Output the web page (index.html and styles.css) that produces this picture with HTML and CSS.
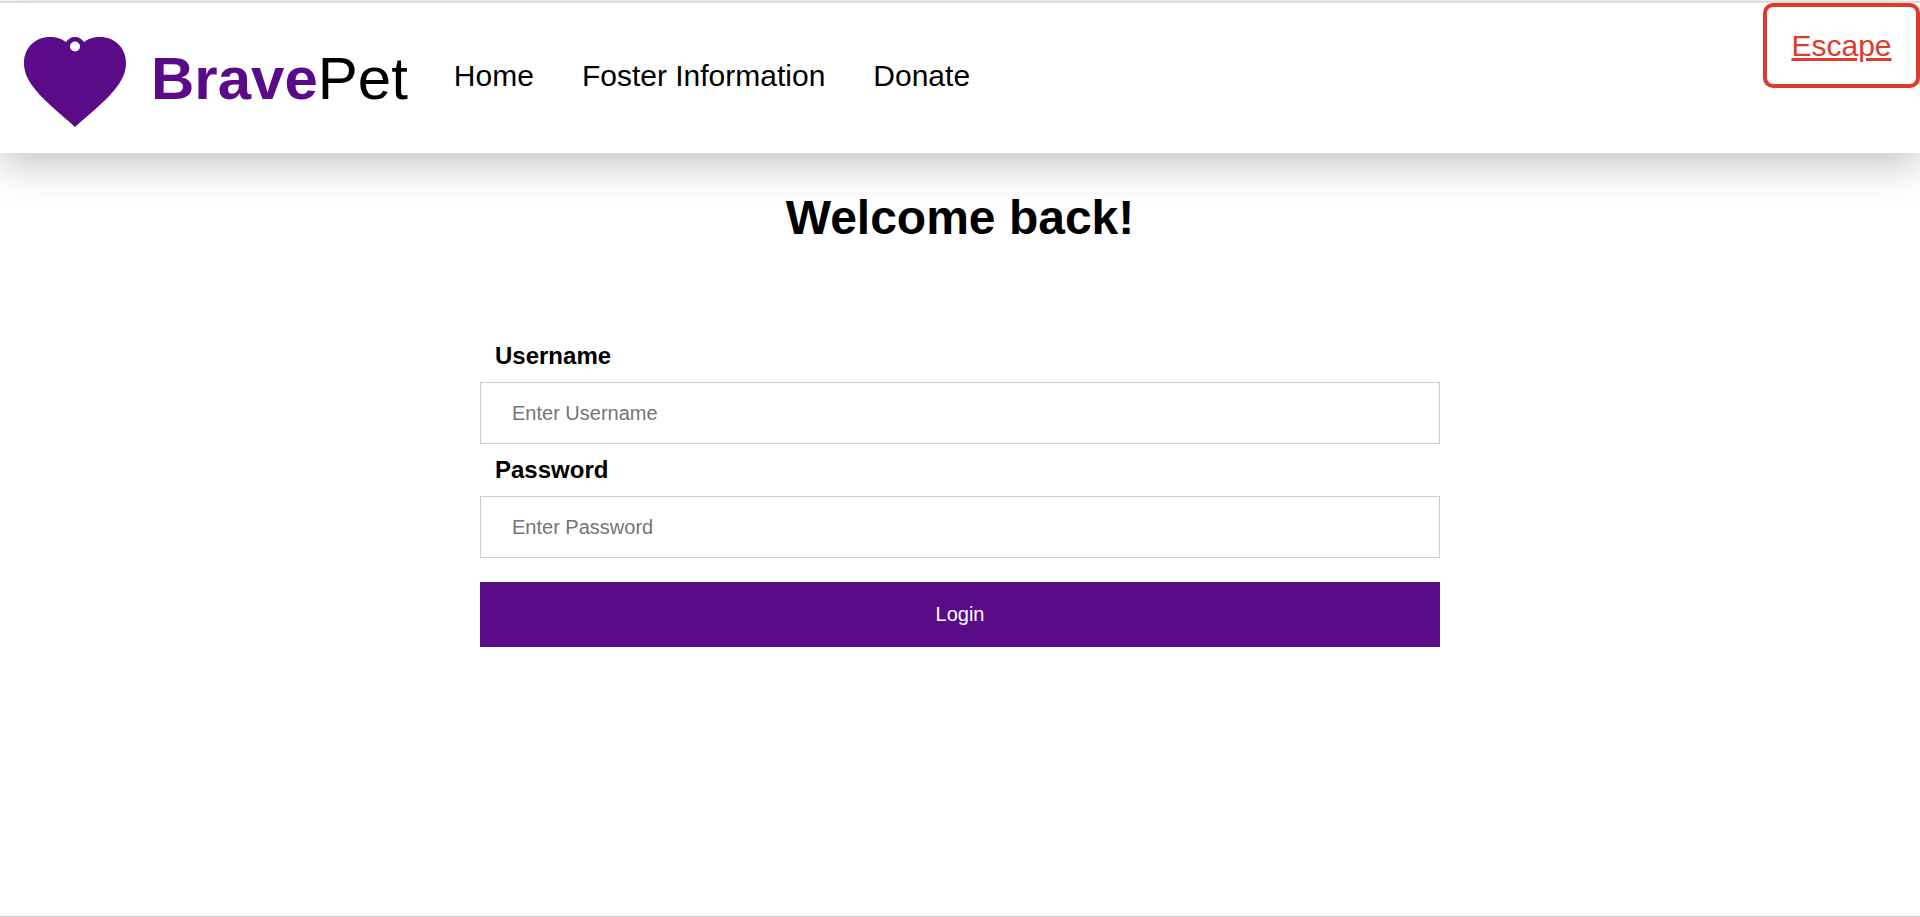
FILE: index.html
```html
<!DOCTYPE html>
<html lang="en">
<head>
    <meta charset="UTF-8">
    <meta name="viewport" content="width=device-width, initial-scale=1.0">
    <title>BravePet - Login</title>
    <link rel="stylesheet" href="styles.css">
</head>
<body>
    <header class="navbar">
        <a class="brand" href="#">
            <svg class="brand-logo" viewBox="0 0 102 90" aria-hidden="true">
                <path fill-rule="evenodd" fill="#5a0b87" d="M51 90C37 77 17 62 7 47C2 39 0 33 0 26C0 10 12 0 26 0C33 0 38 2 42 5C44 2 47 0 51 0C55 0 58 2 60 5C64 2 69 0 76 0C90 0 102 10 102 26C102 33 100 39 95 47C85 62 65 77 51 90ZM51 4.500A5 5 0 1 0 51 14.500A5 5 0 1 0 51 4.500Z"/>
            </svg>
            <span class="brand-name"><b>Brave</b>Pet</span>
        </a>
        <nav class="nav-links">
            <a href="#">Home</a>
            <a href="#">Foster Information</a>
            <a href="#">Donate</a>
        </nav>
        <a class="escape" href="#">Escape</a>
    </header>
    <main class="content">
        <h1>Welcome back!</h1>
        <form class="login-form">
            <label for="username">Username</label>
            <input id="username" type="text" placeholder="Enter Username">
            <label for="password">Password</label>
            <input id="password" type="password" placeholder="Enter Password">
            <button type="button">Login</button>
        </form>
    </main>
</body>
</html>
```

FILE: styles.css
```css
html, body {
    height: 100%;
}

body {
    font-family: 'Liberation Sans', Arial, sans-serif;
    margin: 0;
    padding-top: 1px;
    box-sizing: border-box;
    background: #fff;
    color: #000;
    border-bottom: 1px solid #c8c8c8;
    overflow: hidden;
}

a {
    color: inherit;
    text-decoration: none;
}

.navbar {
    display: flex;
    align-items: flex-start;
    height: 150px;
    border-top: 2px solid #dcdcdc;
    background: #fff;
    box-shadow: 0 10px 40px rgba(0, 0, 0, 0.25);
}

.brand {
    display: flex;
    align-items: center;
    gap: 25px;
    height: 146px;
    padding-left: 24px;
}

.brand-logo {
    width: 102px;
    height: 90px;
    margin-top: 12px;
}

.brand-name {
    padding-top: 5px;
    font-size: 60px;
}

.brand-name b {
    color: #5a0b87;
}

.nav-links {
    display: flex;
    align-items: center;
    gap: 48px;
    height: 146px;
    margin-left: 46px;
    font-size: 30px;
}

.escape {
    box-sizing: border-box;
    display: flex;
    align-items: center;
    justify-content: center;
    width: 157px;
    height: 85px;
    margin-left: auto;
    border: 4px solid #e03a2c;
    border-radius: 10px;
    color: #e03a2c;
    font-size: 30px;
    text-decoration: underline;
}

.content {
    display: flex;
    flex-direction: column;
    align-items: center;
}

h1 {
    margin: 37px 0 0;
    font-size: 48px;
    line-height: 55px;
}

.login-form {
    display: flex;
    flex-direction: column;
    width: 960px;
    margin-top: 97px;
}

.login-form label {
    padding-left: 15px;
    font-size: 24px;
    font-weight: bold;
    line-height: 27px;
    margin-bottom: 13px;
}

.login-form input {
    box-sizing: border-box;
    height: 62px;
    margin-bottom: 12px;
    padding: 0 31px;
    border: 1px solid #ccc;
    font-family: inherit;
    font-size: 20px;
    outline: none;
}

.login-form input::placeholder {
    color: #757575;
}

.login-form button {
    height: 65px;
    margin-top: 12px;
    background: #5a0b87;
    color: #fff;
    border: none;
    font-family: inherit;
    font-size: 20px;
    cursor: pointer;
}
```
